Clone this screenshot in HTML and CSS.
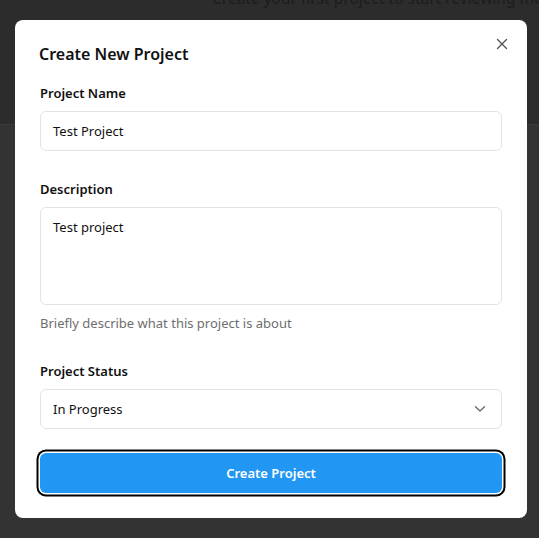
FILE: index.html
```html
<!DOCTYPE html>
<html lang="en">
<head>
<meta charset="utf-8">
<title>Create New Project</title>
<link rel="stylesheet" href="styles.css">
</head>
<body>
<div class="page">
  <div class="page-head">
    <p class="page-sub">Create your first project to start reviewing media</p>
  </div>
  <div class="page-body"></div>
</div>
<div class="backdrop">
  <div class="modal">
    <div class="modal-head">
      <h2 class="modal-title">Create New Project</h2>
      <button class="close" aria-label="Close">
        <svg width="12" height="12" viewBox="0 0 12 12"><path d="M1.5 1.5 L10.5 10.5 M10.5 1.5 L1.5 10.5" stroke="#555" stroke-width="1.4" fill="none" stroke-linecap="round"/></svg>
      </button>
    </div>
    <div class="field field-name">
      <label class="label">Project Name</label>
      <div class="input">Test Project</div>
    </div>
    <div class="field field-desc">
      <label class="label">Description</label>
      <div class="input textarea">Test project</div>
      <p class="help">Briefly describe what this project is about</p>
    </div>
    <div class="field field-status">
      <label class="label">Project Status</label>
      <div class="input select">
        <span>In Progress</span>
        <svg width="12" height="8" viewBox="0 0 12 8"><path d="M1.5 1.8 L6 6 L10.5 1.8" stroke="#666" stroke-width="1.3" fill="none" stroke-linecap="round" stroke-linejoin="round"/></svg>
      </div>
    </div>
    <button class="submit">Create Project</button>
  </div>
</div>
</body>
</html>
```
FILE: styles.css
```css
* { box-sizing: border-box; }
html, body { margin: 0; padding: 0; }
body {
  width: 539px;
  height: 538px;
  overflow: hidden;
  font-family: "Noto Sans", "Open Sans", sans-serif;
  background: #333333;
  position: relative;
}
.page { display: flex; flex-direction: column; height: 100%; }
.page-head {
  height: 125px;
  background: #2c2c2c;
  border-bottom: 1px solid #3a3a3a;
  overflow: hidden;
}
.page-sub {
  margin: -13px 0 0 212px;
  white-space: nowrap;
  font-size: 15.5px;
  line-height: 22px;
  color: #1c1c1c;
}
.page-body { flex: 1; background: #333333; }
.backdrop {
  position: absolute;
  inset: 0;
  padding: 20px 0 0 15px;
}
.modal {
  width: 512px;
  height: 498px;
  background: #fff;
  border-radius: 8px;
  padding: 24px 25px 24px 25px;
  display: flex;
  flex-direction: column;
}
.modal-head {
  display: flex;
  justify-content: space-between;
  align-items: flex-start;
  margin-bottom: 19px;
}
.modal-title {
  margin: 0 0 0 -1px;
  font-size: 16px;
  line-height: 20px;
  font-weight: 600;
  color: #111;
}
.close {
  border: 0;
  background: none;
  padding: 0;
  margin: -6px -6px 0 0;
  width: 12px;
  height: 12px;
  display: flex;
}
.field { display: flex; flex-direction: column; }
.field-name { margin-bottom: 28px; }
.field-desc { margin-bottom: 28px; }
.field-status { margin-bottom: 24px; }
.label {
  font-size: 13px;
  line-height: 20px;
  font-weight: 600;
  color: #111;
  margin-bottom: 8px;
}
.input {
  height: 40px;
  border: 1px solid #e3e3e3;
  border-radius: 6px;
  padding: 0 12px;
  display: flex;
  align-items: center;
  font-size: 13px;
  color: #111;
}
.textarea {
  height: 98px;
  align-items: flex-start;
  padding-top: 9px;
  line-height: 20px;
}
.select { justify-content: space-between; padding-right: 15px; }
.help {
  margin: 8px 0 0;
  font-size: 13px;
  line-height: 20px;
  color: #6e6e6e;
}
.submit {
  height: 40px;
  border: 0;
  border-radius: 6px;
  background: #2196f3;
  color: #fff;
  font-family: inherit;
  font-size: 13px;
  font-weight: 600;
  box-shadow: 0 0 0 1.5px #fff, 0 0 0 3.5px #000;
}
```
